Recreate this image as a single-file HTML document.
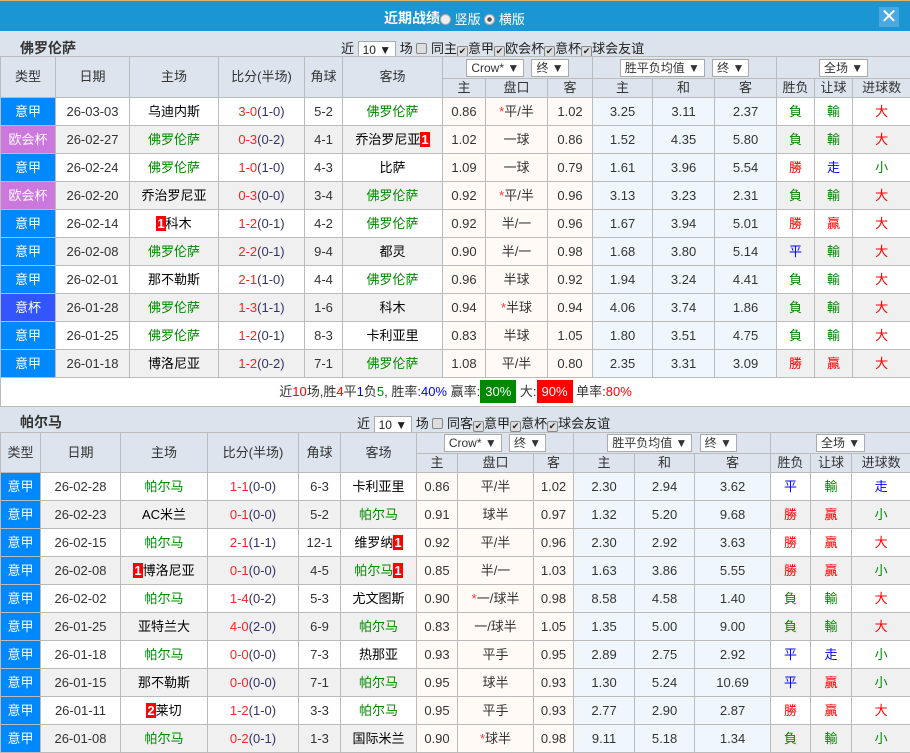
<!DOCTYPE html>
<html><head><meta charset="utf-8">
<style>
*{margin:0;padding:0;box-sizing:border-box}
body{width:910px;height:753px;overflow:hidden;background:#dbe3ec;font-family:"Liberation Sans","Noto Sans CJK SC",sans-serif;font-size:13px;color:#333;position:relative}
.top{position:absolute;left:0;top:0;width:910px;height:31px;background:#1b96d5;border-top:1px solid #e2b36a;color:#fff}
.top .t{position:absolute;left:384px;top:7px;font-size:14px;font-weight:bold}
.top .r{position:absolute;top:8px;font-size:13px}
.rad{display:inline-block;width:11px;height:11px;border-radius:50%;background:#eee;border:1px solid #aaa;vertical-align:-1px}
.rad.on{background:radial-gradient(#555 30%,#eee 40%)}
.x{position:absolute;left:879px;top:6px;width:20px;height:20px;background:#4aa9e0;color:#fff;font-size:20px;line-height:20px;text-align:center}
.ttl{position:absolute;font-weight:bold;font-size:14px;color:#333}
.ctl{position:absolute;font-size:13px;color:#222}
.sel{display:inline-block;background:#fff;border:1px solid #aaa;padding:0 4px;height:18px;line-height:17px;font-size:12px;vertical-align:middle}
.cb{display:inline-block;width:11px;height:11px;border:1px solid #888;background:#ddd;border-radius:2px;vertical-align:-1px;font-size:9px;line-height:9px;text-align:center}
table{position:absolute;left:0;border-collapse:collapse;table-layout:fixed;background:#fff}
td{border:1px solid #bbb;text-align:center;height:28px;padding:0;white-space:nowrap;overflow:hidden;line-height:16px}
tr.h td{background:#dde4ee;color:#333;height:auto}
tr.e td{background:#f0f0f0}
td.o{background:#fffaf6!important}
td.p{background:#f0f7fc!important}
td.y{background:#0088ff!important;color:#fff}
td.u{background:#cc77dd!important;color:#fff}
td.k{background:#3355ff!important;color:#fff}
.g{color:#080}.rd{color:#f00}.b{color:#00f}.k2{color:#000}
.sc{color:#f22}.sh{color:#336}
.n{background:#f00;color:#fff;font-weight:bold;padding:0 1px}
.st{color:#f33}
</style></head><body>
<div class="top"><span class="t">近期战绩</span><span class="r" style="left:440px"><span class="rad"></span> 竖版 <span class="rad on"></span> 横版</span><div class="x">✕</div></div>

<div class="ttl" style="left:20px;top:38px">佛罗伦萨</div>
<div class="ctl" style="left:341px;top:38px">近 <span class="sel">10 ▼</span> 场 <span class="cb"></span> 同主<span class="cb">✔</span>意甲<span class="cb">✔</span>欧会杯<span class="cb">✔</span>意杯<span class="cb">✔</span>球会友谊</div>

<table style="top:56px;width:910px">
<colgroup><col style="width:55px"><col style="width:74px"><col style="width:89px"><col style="width:86px"><col style="width:38px"><col style="width:100px"><col style="width:43px"><col style="width:62px"><col style="width:45px"><col style="width:60px"><col style="width:62px"><col style="width:62px"><col style="width:38px"><col style="width:38px"><col style="width:58px"></colgroup>
<tr class="h" style="height:22px"><td rowspan="2">类型</td><td rowspan="2">日期</td><td rowspan="2">主场</td><td rowspan="2">比分(半场)</td><td rowspan="2">角球</td><td rowspan="2">客场</td><td colspan="3"><span class="sel">Crow* ▼</span>&nbsp;&nbsp;<span class="sel">终 ▼</span></td><td colspan="3"><span class="sel">胜平负均值 ▼</span>&nbsp;&nbsp;<span class="sel">终 ▼</span></td><td colspan="3"><span class="sel">全场 ▼</span></td></tr>
<tr class="h" style="height:19px"><td>主</td><td>盘口</td><td>客</td><td>主</td><td>和</td><td>客</td><td>胜负</td><td>让球</td><td>进球数</td></tr>
<tr><td class="y">意甲</td><td>26-03-03</td><td class="k2">乌迪内斯</td><td><span class="sc">3-0</span><span class="sh">(1-0)</span></td><td>5-2</td><td class="g">佛罗伦萨</td><td class="o">0.86</td><td class="o"><span class="st">*</span>平/半</td><td class="o">1.02</td><td class="p">3.25</td><td class="p">3.11</td><td class="p">2.37</td><td class="g">負</td><td class="g">輸</td><td class="rd">大</td></tr>
<tr class="e"><td class="u">欧会杯</td><td>26-02-27</td><td class="g">佛罗伦萨</td><td><span class="sc">0-3</span><span class="sh">(0-2)</span></td><td>4-1</td><td class="k2">乔治罗尼亚<span class="n">1</span></td><td class="o">1.02</td><td class="o">一球</td><td class="o">0.86</td><td class="p">1.52</td><td class="p">4.35</td><td class="p">5.80</td><td class="g">負</td><td class="g">輸</td><td class="rd">大</td></tr>
<tr><td class="y">意甲</td><td>26-02-24</td><td class="g">佛罗伦萨</td><td><span class="sc">1-0</span><span class="sh">(1-0)</span></td><td>4-3</td><td class="k2">比萨</td><td class="o">1.09</td><td class="o">一球</td><td class="o">0.79</td><td class="p">1.61</td><td class="p">3.96</td><td class="p">5.54</td><td class="rd">勝</td><td class="b">走</td><td class="g">小</td></tr>
<tr class="e"><td class="u">欧会杯</td><td>26-02-20</td><td class="k2">乔治罗尼亚</td><td><span class="sc">0-3</span><span class="sh">(0-0)</span></td><td>3-4</td><td class="g">佛罗伦萨</td><td class="o">0.92</td><td class="o"><span class="st">*</span>平/半</td><td class="o">0.96</td><td class="p">3.13</td><td class="p">3.23</td><td class="p">2.31</td><td class="g">負</td><td class="g">輸</td><td class="rd">大</td></tr>
<tr><td class="y">意甲</td><td>26-02-14</td><td class="k2"><span class="n">1</span>科木</td><td><span class="sc">1-2</span><span class="sh">(0-1)</span></td><td>4-2</td><td class="g">佛罗伦萨</td><td class="o">0.92</td><td class="o">半/一</td><td class="o">0.96</td><td class="p">1.67</td><td class="p">3.94</td><td class="p">5.01</td><td class="rd">勝</td><td class="rd">贏</td><td class="rd">大</td></tr>
<tr class="e"><td class="y">意甲</td><td>26-02-08</td><td class="g">佛罗伦萨</td><td><span class="sc">2-2</span><span class="sh">(0-1)</span></td><td>9-4</td><td class="k2">都灵</td><td class="o">0.90</td><td class="o">半/一</td><td class="o">0.98</td><td class="p">1.68</td><td class="p">3.80</td><td class="p">5.14</td><td class="b">平</td><td class="g">輸</td><td class="rd">大</td></tr>
<tr><td class="y">意甲</td><td>26-02-01</td><td class="k2">那不勒斯</td><td><span class="sc">2-1</span><span class="sh">(1-0)</span></td><td>4-4</td><td class="g">佛罗伦萨</td><td class="o">0.96</td><td class="o">半球</td><td class="o">0.92</td><td class="p">1.94</td><td class="p">3.24</td><td class="p">4.41</td><td class="g">負</td><td class="g">輸</td><td class="rd">大</td></tr>
<tr class="e"><td class="k">意杯</td><td>26-01-28</td><td class="g">佛罗伦萨</td><td><span class="sc">1-3</span><span class="sh">(1-1)</span></td><td>1-6</td><td class="k2">科木</td><td class="o">0.94</td><td class="o"><span class="st">*</span>半球</td><td class="o">0.94</td><td class="p">4.06</td><td class="p">3.74</td><td class="p">1.86</td><td class="g">負</td><td class="g">輸</td><td class="rd">大</td></tr>
<tr><td class="y">意甲</td><td>26-01-25</td><td class="g">佛罗伦萨</td><td><span class="sc">1-2</span><span class="sh">(0-1)</span></td><td>8-3</td><td class="k2">卡利亚里</td><td class="o">0.83</td><td class="o">半球</td><td class="o">1.05</td><td class="p">1.80</td><td class="p">3.51</td><td class="p">4.75</td><td class="g">負</td><td class="g">輸</td><td class="rd">大</td></tr>
<tr class="e"><td class="y">意甲</td><td>26-01-18</td><td class="k2">博洛尼亚</td><td><span class="sc">1-2</span><span class="sh">(0-2)</span></td><td>7-1</td><td class="g">佛罗伦萨</td><td class="o">1.08</td><td class="o">平/半</td><td class="o">0.80</td><td class="p">2.35</td><td class="p">3.31</td><td class="p">3.09</td><td class="rd">勝</td><td class="rd">贏</td><td class="rd">大</td></tr>
<tr><td colspan="15" style="height:29px;color:#333">近<span class="rd">10</span>场,胜<span class="rd">4</span>平<span class="b">1</span>负<span class="g">5</span>, 胜率:<span class="b">40%</span> 赢率:<span style="background:#080;color:#fff;padding:4px 5px">30%</span> 大:<span style="background:#f00;color:#fff;padding:4px 5px">90%</span> 单率:<span class="rd">80%</span></td></tr>
</table>

<div class="ttl" style="left:20px;top:412px">帕尔马</div>
<div class="ctl" style="left:357px;top:413px">近 <span class="sel">10 ▼</span> 场 <span class="cb"></span> 同客<span class="cb">✔</span>意甲<span class="cb">✔</span>意杯<span class="cb">✔</span>球会友谊</div>

<table style="top:432px;width:910px">
<colgroup><col style="width:40px"><col style="width:80px"><col style="width:87px"><col style="width:91px"><col style="width:42px"><col style="width:76px"><col style="width:41px"><col style="width:76px"><col style="width:40px"><col style="width:61px"><col style="width:60px"><col style="width:76px"><col style="width:40px"><col style="width:41px"><col style="width:59px"></colgroup>
<tr class="h" style="height:21px"><td rowspan="2">类型</td><td rowspan="2">日期</td><td rowspan="2">主场</td><td rowspan="2">比分(半场)</td><td rowspan="2">角球</td><td rowspan="2">客场</td><td colspan="3"><span class="sel">Crow* ▼</span>&nbsp;&nbsp;<span class="sel">终 ▼</span></td><td colspan="3"><span class="sel">胜平负均值 ▼</span>&nbsp;&nbsp;<span class="sel">终 ▼</span></td><td colspan="3"><span class="sel">全场 ▼</span></td></tr>
<tr class="h" style="height:19px"><td>主</td><td>盘口</td><td>客</td><td>主</td><td>和</td><td>客</td><td>胜负</td><td>让球</td><td>进球数</td></tr>
<tr><td class="y">意甲</td><td>26-02-28</td><td class="g">帕尔马</td><td><span class="sc">1-1</span><span class="sh">(0-0)</span></td><td>6-3</td><td class="k2">卡利亚里</td><td class="o">0.86</td><td class="o">平/半</td><td class="o">1.02</td><td class="p">2.30</td><td class="p">2.94</td><td class="p">3.62</td><td class="b">平</td><td class="g">輸</td><td class="b">走</td></tr>
<tr class="e"><td class="y">意甲</td><td>26-02-23</td><td class="k2">AC米兰</td><td><span class="sc">0-1</span><span class="sh">(0-0)</span></td><td>5-2</td><td class="g">帕尔马</td><td class="o">0.91</td><td class="o">球半</td><td class="o">0.97</td><td class="p">1.32</td><td class="p">5.20</td><td class="p">9.68</td><td class="rd">勝</td><td class="rd">贏</td><td class="g">小</td></tr>
<tr><td class="y">意甲</td><td>26-02-15</td><td class="g">帕尔马</td><td><span class="sc">2-1</span><span class="sh">(1-1)</span></td><td>12-1</td><td class="k2">维罗纳<span class="n">1</span></td><td class="o">0.92</td><td class="o">平/半</td><td class="o">0.96</td><td class="p">2.30</td><td class="p">2.92</td><td class="p">3.63</td><td class="rd">勝</td><td class="rd">贏</td><td class="rd">大</td></tr>
<tr class="e"><td class="y">意甲</td><td>26-02-08</td><td class="k2"><span class="n">1</span>博洛尼亚</td><td><span class="sc">0-1</span><span class="sh">(0-0)</span></td><td>4-5</td><td class="g">帕尔马<span class="n">1</span></td><td class="o">0.85</td><td class="o">半/一</td><td class="o">1.03</td><td class="p">1.63</td><td class="p">3.86</td><td class="p">5.55</td><td class="rd">勝</td><td class="rd">贏</td><td class="g">小</td></tr>
<tr><td class="y">意甲</td><td>26-02-02</td><td class="g">帕尔马</td><td><span class="sc">1-4</span><span class="sh">(0-2)</span></td><td>5-3</td><td class="k2">尤文图斯</td><td class="o">0.90</td><td class="o"><span class="st">*</span>一/球半</td><td class="o">0.98</td><td class="p">8.58</td><td class="p">4.58</td><td class="p">1.40</td><td class="g">負</td><td class="g">輸</td><td class="rd">大</td></tr>
<tr class="e"><td class="y">意甲</td><td>26-01-25</td><td class="k2">亚特兰大</td><td><span class="sc">4-0</span><span class="sh">(2-0)</span></td><td>6-9</td><td class="g">帕尔马</td><td class="o">0.83</td><td class="o">一/球半</td><td class="o">1.05</td><td class="p">1.35</td><td class="p">5.00</td><td class="p">9.00</td><td class="g">負</td><td class="g">輸</td><td class="rd">大</td></tr>
<tr><td class="y">意甲</td><td>26-01-18</td><td class="g">帕尔马</td><td><span class="sc">0-0</span><span class="sh">(0-0)</span></td><td>7-3</td><td class="k2">热那亚</td><td class="o">0.93</td><td class="o">平手</td><td class="o">0.95</td><td class="p">2.89</td><td class="p">2.75</td><td class="p">2.92</td><td class="b">平</td><td class="b">走</td><td class="g">小</td></tr>
<tr class="e"><td class="y">意甲</td><td>26-01-15</td><td class="k2">那不勒斯</td><td><span class="sc">0-0</span><span class="sh">(0-0)</span></td><td>7-1</td><td class="g">帕尔马</td><td class="o">0.95</td><td class="o">球半</td><td class="o">0.93</td><td class="p">1.30</td><td class="p">5.24</td><td class="p">10.69</td><td class="b">平</td><td class="rd">贏</td><td class="g">小</td></tr>
<tr><td class="y">意甲</td><td>26-01-11</td><td class="k2"><span class="n">2</span>莱切</td><td><span class="sc">1-2</span><span class="sh">(1-0)</span></td><td>3-3</td><td class="g">帕尔马</td><td class="o">0.95</td><td class="o">平手</td><td class="o">0.93</td><td class="p">2.77</td><td class="p">2.90</td><td class="p">2.87</td><td class="rd">勝</td><td class="rd">贏</td><td class="rd">大</td></tr>
<tr class="e"><td class="y">意甲</td><td>26-01-08</td><td class="g">帕尔马</td><td><span class="sc">0-2</span><span class="sh">(0-1)</span></td><td>1-3</td><td class="k2">国际米兰</td><td class="o">0.90</td><td class="o"><span class="st">*</span>球半</td><td class="o">0.98</td><td class="p">9.11</td><td class="p">5.18</td><td class="p">1.34</td><td class="g">負</td><td class="g">輸</td><td class="g">小</td></tr>
</table>
</body></html>
